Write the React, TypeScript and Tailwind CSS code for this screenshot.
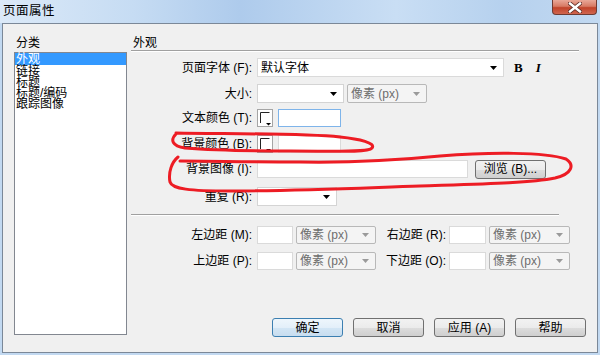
import React from 'react';

const font = "font-['Liberation_Sans','Noto_Sans_CJK_SC',sans-serif]";

function Arrow({ gray }: { gray?: boolean }) {
  return (
    <svg width="7" height="4" viewBox="0 0 7 4" className="shrink-0">
      <path d="M0 0H7L3.5 4Z" fill={gray ? '#9a9a9a' : '#000'} />
    </svg>
  );
}

function Select({ w, text, disabled }: { w: string; text?: string; disabled?: boolean }) {
  return (
    <div
      className={`${w} h-full flex items-center justify-between pl-[3px] pr-[6px] border ${
        disabled ? 'bg-[#f4f4f4] border-[#b8b8b8] rounded-[2px] text-[#6d6d6d]' : 'bg-white border-[#d4d4d4]'
      }`}
    >
      <span className="leading-none">{text}</span>
      <Arrow gray={disabled} />
    </div>
  );
}

function Input({ w, focus }: { w: string; focus?: boolean }) {
  return <div className={`${w} h-full bg-white border ${focus ? 'border-[#7eb4ea]' : 'border-[#dadada]'}`} />;
}

function Swatch() {
  return (
    <svg width="16" height="18" viewBox="0 0 16 18" className="shrink-0">
      <rect x="0.5" y="0.5" width="15" height="17" fill="#fff" stroke="#a5a5a5" />
      <path d="M3.5 14V3.5H12.5" fill="none" stroke="#222" />
      <path d="M9 14H14L11.5 16.5Z" fill="#000" />
    </svg>
  );
}

function Row({ label, h, mt, children }: { label: string; h: string; mt: string; children: React.ReactNode }) {
  return (
    <div className={`flex items-center ${h} ${mt}`}>
      <div className="w-[122px] text-right pr-[1px] leading-none">{label}</div>
      <div className="ml-[4px] flex items-center h-full">{children}</div>
    </div>
  );
}

function Btn({ label, primary }: { label: string; primary?: boolean }) {
  return (
    <div
      className={`w-[71px] h-[19px] rounded-[3px] border flex items-center justify-center leading-none ${
        primary
          ? 'border-[#3c7fb1] bg-[linear-gradient(to_bottom,#eef6fc_0%,#e3eff9_50%,#d3e6f5_50%,#c8ddef_100%)]'
          : 'border-[#707070] bg-[linear-gradient(to_bottom,#f2f2f2_0%,#ebebeb_50%,#dddddd_50%,#cfcfcf_100%)]'
      }`}
    >
      {label}
    </div>
  );
}

export default function App() {
  const items = ['链接', '标题', '标题/编码', '跟踪图像'];
  return (
    <div className={`relative w-[600px] h-[355px] flex flex-col text-[12px] text-black bg-[#c2d9f1] ${font}`}>
      {/* title bar */}
      <div className="h-[23px] flex items-start justify-between bg-[linear-gradient(90deg,#dbe9f8_0%,#c6dcf3_22%,#aecbec_40%,#c9def4_66%,#b6d1ee_84%,#c2d9f1_100%)]">
        <div className="pl-[3px] pt-[4px] text-[12.5px] leading-[14px] tracking-[0.5px]">页面属性</div>
        <div className="mr-[3px] w-[45px] h-[15px] rounded-b-[4px] border border-t-0 border-[#6e3b33] bg-[linear-gradient(to_bottom,#e9a898_0%,#d77a64_45%,#c1432a_55%,#d0664f_100%)] flex items-center justify-center">
          <svg width="14" height="11" viewBox="0 0 14 11">
            <path d="M2 1.5L12 9.5M12 1.5L2 9.5" stroke="#5a2a24" strokeWidth="4" strokeLinecap="square" />
            <path d="M2 1.5L12 9.5M12 1.5L2 9.5" stroke="#fff" strokeWidth="2.4" strokeLinecap="square" />
          </svg>
        </div>
      </div>

      {/* client area */}
      <div className="flex-1 mx-[2px] mb-[2px] border border-[#7b8898] bg-[#f0f0f0] flex">
        {/* category list */}
        <div className="ml-[11px] w-[113px] pt-[12px]">
          <div className="h-[14px] leading-[14px] pl-[2px]">分类</div>
          <div className="mt-[2px] h-[283px] bg-white border border-[#828790]">
            <div className="h-[12px] leading-[12px] bg-[#3399ff] text-white pl-[1px]">外观</div>
            {items.map((t) => (
              <div key={t} className="h-[11px] leading-[11px] pl-[1px] pt-[1px]">
                {t}
              </div>
            ))}
          </div>
        </div>

        {/* appearance panel */}
        <div className="ml-[4px] flex-1 flex flex-col pt-[12px] pr-[11px] pb-[15px]">
          <div className="h-[14px] leading-[14px] pl-[2px]">外观</div>
          <div className="h-[2px] mr-[7px] border-t border-[#a0a0a0] border-b border-b-white" />

          <Row label="页面字体 (F):" h="h-[19px]" mt="mt-[6px]">
            <div className="w-[247px] h-full bg-white border border-[#dadada] flex items-center justify-between pl-[3px] pr-[6px]">
              <span className="leading-none">默认字体</span>
              <Arrow />
            </div>
            <span className="ml-[10px] font-['Liberation_Serif',serif] font-bold text-[13px] leading-none">B</span>
            <span className="ml-[13px] font-['Liberation_Serif',serif] font-bold italic text-[13px] leading-none">I</span>
          </Row>

          <Row label="大小:" h="h-[19px]" mt="mt-[7px]">
            <Select w="w-[87px]" />
            <div className="ml-[3px] h-full flex">
              <Select w="w-[80px]" text="像素 (px)" disabled />
            </div>
          </Row>

          <Row label="文本颜色 (T):" h="h-[18px]" mt="mt-[6px]">
            <Swatch />
            <div className="ml-[5px] h-full flex">
              <Input w="w-[63px]" focus />
            </div>
          </Row>

          <Row label="背景颜色 (B):" h="h-[18px]" mt="mt-[8px]">
            <Swatch />
            <div className="ml-[5px] h-full flex">
              <Input w="w-[63px]" />
            </div>
          </Row>

          <Row label="背景图像 (I):" h="h-[18px]" mt="mt-[7px]">
            <Input w="w-[211px]" />
            <div className="ml-[7px]">
              <Btn label="浏览 (B)..." />
            </div>
          </Row>

          <Row label="重复 (R):" h="h-[19px]" mt="mt-[9px]">
            <Select w="w-[80px]" />
          </Row>

          <div className="mt-[8px] h-[2px] mr-[27px] border-t border-[#a0a0a0] border-b border-b-white" />

          <Row label="左边距 (M):" h="h-[18px]" mt="mt-[10px]">
            <Input w="w-[36px]" />
            <div className="ml-[3px] h-full flex">
              <Select w="w-[80px]" text="像素 (px)" disabled />
            </div>
            <div className="w-[70px] text-right leading-none">右边距 (R):</div>
            <div className="ml-[3px] h-full flex">
              <Input w="w-[37px]" />
            </div>
            <div className="ml-[3px] h-full flex">
              <Select w="w-[81px]" text="像素 (px)" disabled />
            </div>
          </Row>

          <Row label="上边距 (P):" h="h-[18px]" mt="mt-[8px]">
            <Input w="w-[36px]" />
            <div className="ml-[3px] h-full flex">
              <Select w="w-[80px]" text="像素 (px)" disabled />
            </div>
            <div className="w-[70px] text-right leading-none">下边距 (O):</div>
            <div className="ml-[3px] h-full flex">
              <Input w="w-[37px]" />
            </div>
            <div className="ml-[3px] h-full flex">
              <Select w="w-[81px]" text="像素 (px)" disabled />
            </div>
          </Row>

          <div className="mt-auto flex justify-end gap-[10px]">
            <Btn label="确定" primary />
            <Btn label="取消" />
            <Btn label="应用 (A)" />
            <Btn label="帮助" />
          </div>
        </div>
      </div>

      {/* red hand-drawn marks */}
      <svg className="absolute left-0 top-0 pointer-events-none" width="600" height="355" viewBox="0 0 600 355">
        <path
          d="M176 133 C220 134 300 133 340 137 C360 139 376 143 372 148 C368 153 330 151 290 151 C250 151 210 150 185 148 C172 146 170 140 176 134"
          fill="none"
          stroke="#ed1c24"
          strokeWidth="3"
          strokeLinecap="round"
        />
        <path
          d="M178 157 C172 162 168 172 170 182 C172 189 190 191 230 191 C300 191 360 188 420 186 C480 184 530 183 555 178 C572 174 575 165 566 159 C545 152 490 152 440 156 C400 160 360 163 300 162 C250 162 210 161 180 161"
          fill="none"
          stroke="#ed1c24"
          strokeWidth="3"
          strokeLinecap="round"
        />
      </svg>
    </div>
  );
}
